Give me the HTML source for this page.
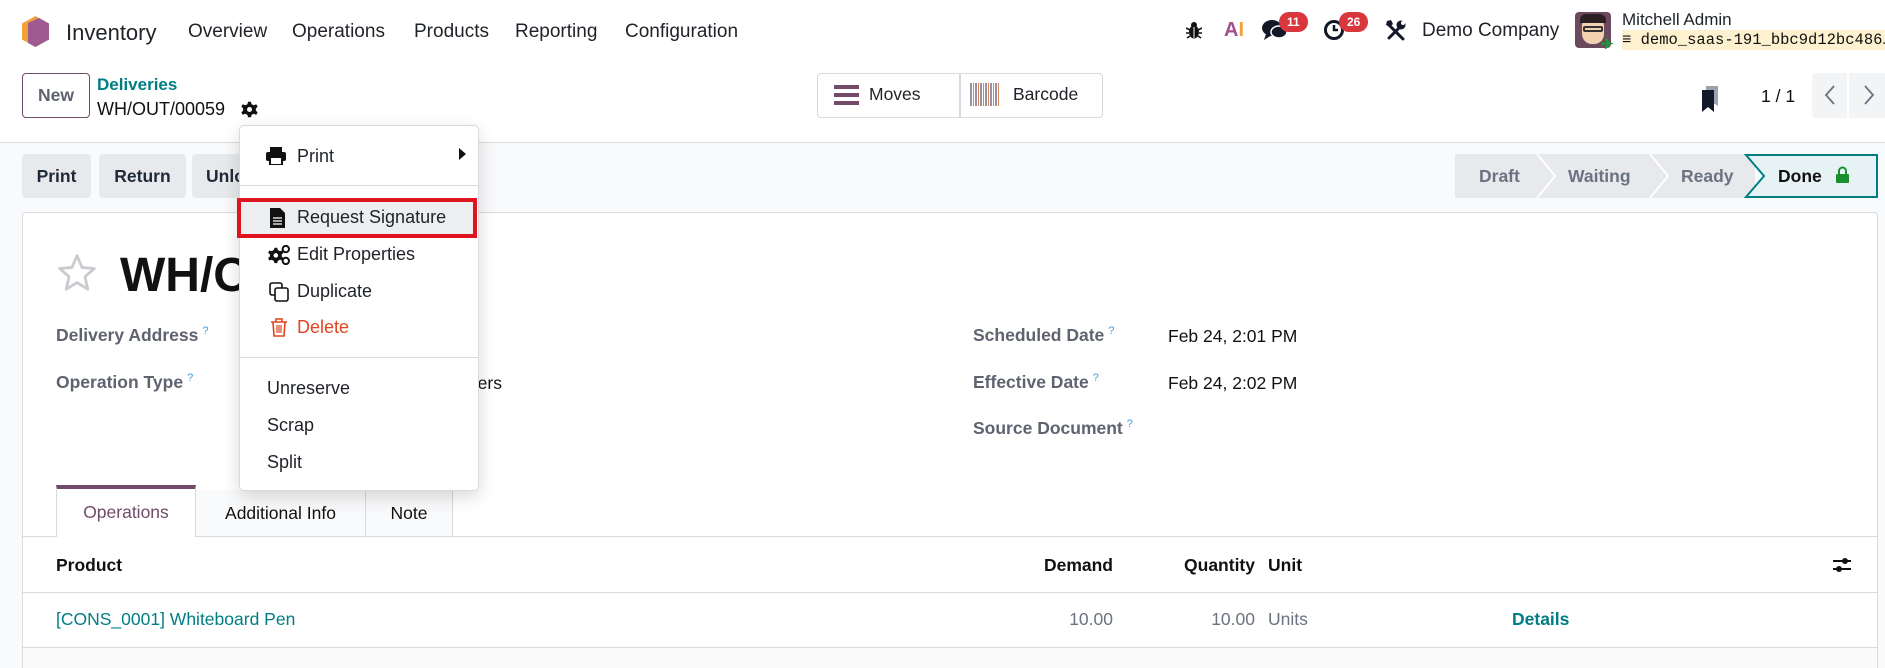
<!DOCTYPE html>
<html style="overflow:hidden"><head><meta charset="utf-8"><style>
*{margin:0;padding:0;box-sizing:border-box}
html,body{width:1885px;height:668px;overflow:hidden}
body{background:#fff;font-family:"Liberation Sans",sans-serif;color:#1f2937;position:relative}
.a{position:absolute;white-space:nowrap}
.nav{font-size:19px;color:#1f2328;top:21px}
.lbl{font-size:17.5px;font-weight:bold;color:#5f636f}
.q{color:#3ba0d6;font-size:11px;vertical-align:top;margin-left:4px;font-weight:normal}
.val{font-size:17.5px;color:#111}
.btn{position:absolute;background:#e7e9ed;border-radius:4px;font-size:17.5px;font-weight:bold;color:#1f2937;text-align:center;line-height:44px;height:44px;top:154px}
.mi{position:absolute;left:297px;font-size:18px;color:#1f2328}
</style></head><body>
<!-- navbar -->
<svg class="a" style="left:22px;top:16px" width="27" height="31" viewBox="0 0 27 31"><polygon points="13.5,0 27,7.5 27,23.5 13.5,31 0,23.5 0,7.5" fill="#f0a13a"/><polygon points="17,2 27,7.5 27,23.5 13.5,31 6,27 6,7" fill="#a05a92"/></svg>
<div class="a" style="left:66px;top:20px;font-size:22px;color:#1f2328">Inventory</div>
<div class="a nav" style="left:188px">Overview</div>
<div class="a nav" style="left:292px">Operations</div>
<div class="a nav" style="left:414px">Products</div>
<div class="a nav" style="left:515px">Reporting</div>
<div class="a nav" style="left:625px">Configuration</div>
<svg class="a" style="left:1186px;top:21px" width="16" height="18" viewBox="0 0 16 18"><ellipse cx="8" cy="11" rx="5" ry="6.5" fill="#111"/><circle cx="8" cy="4" r="3" fill="#111"/><path d="M0 7L4 9M16 7L12 9M0 12H3M16 12H13M1 17L4 15M15 17L12 15" stroke="#111" stroke-width="1.6"/><path d="M8 6V17" stroke="#fff" stroke-width="1"/></svg>
<div class="a" style="left:1224px;top:19px;font-size:20px;font-weight:bold;color:#a0508f">A<span style="color:#f0a13a">I</span></div>
<svg class="a" style="left:1262px;top:19px" width="26" height="22" viewBox="0 0 26 22"><ellipse cx="10" cy="9" rx="10" ry="8" fill="#111827"/><path d="M4 15 L2 21 L10 16Z" fill="#111827"/><ellipse cx="17" cy="13" rx="8" ry="6" fill="#111827" stroke="#fff" stroke-width="1.5"/></svg>
<div class="a" style="left:1279px;top:12px;background:#d9363e;color:#fff;border-radius:10px;font-size:12px;font-weight:bold;padding:3px 8px">11</div>
<svg class="a" style="left:1323px;top:19px" width="22" height="22" viewBox="0 0 22 22"><circle cx="11" cy="11" r="8.5" fill="none" stroke="#111827" stroke-width="3"/><path d="M11 6V11H15" stroke="#111827" stroke-width="2.5" fill="none"/></svg>
<div class="a" style="left:1339px;top:12px;background:#d9363e;color:#fff;border-radius:10px;font-size:12px;font-weight:bold;padding:3px 8px">26</div>
<svg class="a" style="left:1385px;top:19px" width="22" height="22" viewBox="0 0 22 22"><path d="M4 6L18 20" stroke="#111827" stroke-width="3" stroke-linecap="round"/><path d="M2 2L6 1L8 5L5 8L1 6Z" fill="#111827"/><path d="M4 19L13 10" stroke="#111827" stroke-width="3" stroke-linecap="round"/><circle cx="16" cy="6" r="4.5" fill="#111827"/><circle cx="18" cy="4" r="2" fill="#fff"/></svg>
<div class="a" style="left:1422px;top:20px;font-size:19px;color:#1f2328">Demo Company</div>
<div class="a" style="left:1575px;top:12px;width:36px;height:36px;border-radius:4px;background:#6b4a5e;overflow:hidden"><div style="position:absolute;left:7px;top:6px;width:22px;height:26px;background:#f2d2b0;border-radius:8px 8px 10px 10px"></div><div style="position:absolute;left:5px;top:2px;width:26px;height:9px;background:#2b2024;border-radius:6px 6px 0 0"></div><div style="position:absolute;left:8px;top:14px;width:20px;height:6px;border:2px solid #333;border-radius:2px"></div></div>
<div class="a" style="left:1601px;top:35px;color:#1e9a3a;font-size:15px;font-weight:bold">✈</div>
<div class="a" style="left:1622px;top:10px;font-size:17px;color:#1f2328">Mitchell Admin</div>
<div class="a" style="left:1622px;top:30px;width:263px;height:20px;background:#fdf1cf;font-family:'Liberation Mono',monospace;font-size:15.5px;line-height:20px;color:#111;overflow:hidden">≡ demo_saas-191_bbc9d12bc486…</div>
<!-- control panel -->
<div class="a" style="left:22px;top:73px;width:68px;height:45px;border:1px solid #714b67;border-radius:4px;font-size:17.5px;font-weight:bold;color:#5f636f;text-align:center;line-height:43px">New</div>
<div class="a" style="left:97px;top:75px;font-size:17px;font-weight:bold;color:#017e84">Deliveries</div>
<div class="a" style="left:97px;top:99px;font-size:18px;color:#111">WH/OUT/00059</div>
<svg class="a" style="left:241px;top:101px" width="17" height="17" viewBox="0 0 24 24"><path d="M10 1H14L15 4.5L18 6L21.5 4.5L23.5 8L21 10.5V13.5L23.5 16L21.5 19.5L18 18L15 19.5L14 23H10L9 19.5L6 18L2.5 19.5L0.5 16L3 13.5V10.5L0.5 8L2.5 4.5L6 6L9 4.5Z" fill="#111"/><circle cx="12" cy="12" r="3.5" fill="#fff"/></svg>
<div class="a" style="left:817px;top:73px;width:286px;height:45px;border:1px solid #d8dadd;border-radius:4px"></div>
<div class="a" style="left:959px;top:73px;width:2px;height:45px;background:#d8dadd"></div>
<div class="a" style="left:834px;top:85px;width:25px;height:4px;background:#714b67;box-shadow:0 8px 0 #714b67,0 16px 0 #714b67"></div>
<div class="a" style="left:869px;top:84px;font-size:17.5px;color:#1f2328">Moves</div>
<div class="a" style="left:970px;top:83px;width:30px;height:23px;background:repeating-linear-gradient(90deg,#9c8fa0 0 2px,#fff 2px 3px,#d4895a 3px 4px,#fff 4px 5px)"></div>
<div class="a" style="left:1013px;top:84px;font-size:17.5px;color:#1f2328">Barcode</div>
<svg class="a" style="left:1700px;top:86px" width="22" height="26" viewBox="0 0 22 26"><path d="M6 0H18V20L12 16L6 20Z" fill="#9ca3af"/><path d="M2 4H14V26L8 21L2 26Z" fill="#111827"/></svg>
<div class="a" style="left:1761px;top:86px;font-size:17.5px;color:#111">1 / 1</div>
<div class="a" style="left:1812px;top:73px;width:35px;height:45px;background:#f3f4f6;border-radius:4px 0 0 4px"></div>
<div class="a" style="left:1849px;top:73px;width:36px;height:45px;background:#f3f4f6"></div>
<svg class="a" style="left:1823px;top:84px" width="14" height="22" viewBox="0 0 14 22"><path d="M11 2L3 11L11 20" stroke="#6b7280" stroke-width="1.8" fill="none"/></svg>
<svg class="a" style="left:1862px;top:84px" width="14" height="22" viewBox="0 0 14 22"><path d="M3 2L11 11L3 20" stroke="#6b7280" stroke-width="1.8" fill="none"/></svg>
<!-- lower area -->
<div class="a" style="left:0;top:142px;width:1885px;height:526px;background:#f9fafb;border-top:1px solid #d8dadd"></div>
<div class="btn" style="left:22px;width:69px">Print</div>
<div class="btn" style="left:99px;width:87px">Return</div>
<div class="btn" style="left:192px;width:60px;text-align:left;padding-left:14px">Unlock</div>
<svg class="a" style="left:1455px;top:154px" width="424" height="44" viewBox="0 0 424 44"><rect x="0" y="0" width="300" height="44" fill="#e7e9ed"/><path d="M82 0L100 22L82 44" stroke="#fff" stroke-width="2" fill="none"/><path d="M195 0L213 22L195 44" stroke="#fff" stroke-width="2" fill="none"/><path d="M291 1H422V43H291L309 22Z" fill="#e6f2f3" stroke="#017e84" stroke-width="2"/></svg>
<div class="a" style="left:1479px;top:166px;font-size:17.5px;font-weight:bold;color:#6b7280">Draft</div>
<div class="a" style="left:1568px;top:166px;font-size:17.5px;font-weight:bold;color:#6b7280">Waiting</div>
<div class="a" style="left:1681px;top:166px;font-size:17.5px;font-weight:bold;color:#6b7280">Ready</div>
<div class="a" style="left:1778px;top:166px;font-size:17.5px;font-weight:bold;color:#111">Done</div>
<svg class="a" style="left:1836px;top:166px" width="13" height="17" viewBox="0 0 13 17"><path d="M3 8V5A3.5 3.5 0 0 1 10 5V8" stroke="#1a8f2e" stroke-width="2" fill="none"/><rect x="0" y="8" width="13" height="9" rx="1" fill="#1a8f2e"/></svg>
<!-- sheet -->
<div class="a" style="left:22px;top:212px;width:1856px;height:470px;background:#fff;border:1px solid #d8dadd;border-radius:4px"></div>
<div class="a" style="left:23px;top:647px;width:1854px;height:21px;background:#fafafa;border-top:1px solid #d8dadd"></div>
<svg class="a" style="left:56px;top:253px" width="42" height="40" viewBox="0 0 24 23"><path d="M12 1.5L14.9 8.3L22 8.9L16.6 13.6L18.2 20.8L12 17L5.8 20.8L7.4 13.6L2 8.9L9.1 8.3Z" fill="none" stroke="#c9cbcf" stroke-width="1.6" stroke-linejoin="round"/></svg>
<div class="a" style="left:120px;top:248px;font-size:48px;font-weight:bold;color:#111">WH/OUT/00059</div>
<div class="a lbl" style="left:56px;top:325px">Delivery Address<span class="q">?</span></div>
<div class="a lbl" style="left:56px;top:372px">Operation Type<span class="q">?</span></div>
<div class="a val" style="left:220px;top:373px;width:282px;text-align:right">San Francisco: Delivery Orders</div>
<div class="a lbl" style="left:973px;top:325px">Scheduled Date<span class="q">?</span></div>
<div class="a lbl" style="left:973px;top:372px">Effective Date<span class="q">?</span></div>
<div class="a lbl" style="left:973px;top:418px">Source Document<span class="q">?</span></div>
<div class="a val" style="left:1168px;top:326px">Feb 24, 2:01 PM</div>
<div class="a val" style="left:1168px;top:373px">Feb 24, 2:02 PM</div>
<!-- tabs -->
<div class="a" style="left:23px;top:536px;width:1854px;height:1px;background:#d8dadd"></div>
<div class="a" style="left:56px;top:485px;width:140px;height:52px;background:#fff;border:1px solid #d8dadd;border-top:4px solid #714b67;border-bottom:none;text-align:center;line-height:46px;font-size:17.5px;color:#714b67">Operations</div>
<div class="a" style="left:196px;top:490px;width:170px;height:46px;background:#f9fafb;border-right:1px solid #d8dadd;text-align:center;line-height:46px;font-size:17.5px;color:#111">Additional Info</div>
<div class="a" style="left:366px;top:490px;width:87px;height:46px;background:#f9fafb;border-right:1px solid #d8dadd;text-align:center;line-height:46px;font-size:17.5px;color:#111">Note</div>
<div class="a" style="left:56px;top:555px;font-size:17.5px;font-weight:bold;color:#111">Product</div>
<div class="a" style="left:1040px;top:555px;width:73px;text-align:right;font-size:17.5px;font-weight:bold;color:#111">Demand</div>
<div class="a" style="left:1170px;top:555px;width:85px;text-align:right;font-size:17.5px;font-weight:bold;color:#111">Quantity</div>
<div class="a" style="left:1268px;top:555px;font-size:17.5px;font-weight:bold;color:#111">Unit</div>
<svg class="a" style="left:1832px;top:556px" width="20" height="18" viewBox="0 0 20 18"><path d="M1 5H19M1 13H19" stroke="#111" stroke-width="2"/><circle cx="13" cy="5" r="3" fill="#111"/><circle cx="7" cy="13" r="3" fill="#111"/></svg>
<div class="a" style="left:23px;top:592px;width:1854px;height:1px;background:#d8dadd"></div>
<div class="a" style="left:56px;top:609px;font-size:17.5px;color:#017e84">[CONS_0001] Whiteboard Pen</div>
<div class="a" style="left:1040px;top:609px;width:73px;text-align:right;font-size:17.5px;color:#6b7280">10.00</div>
<div class="a" style="left:1170px;top:609px;width:85px;text-align:right;font-size:17.5px;color:#6b7280">10.00</div>
<div class="a" style="left:1268px;top:609px;font-size:17.5px;color:#6b7280">Units</div>
<div class="a" style="left:1512px;top:609px;font-size:17.5px;font-weight:bold;color:#017e84">Details</div>
<!-- dropdown -->
<div class="a" style="left:239px;top:125px;width:240px;height:366px;background:#fff;border:1px solid #d8dadd;border-radius:5px;box-shadow:0 6px 18px rgba(0,0,0,.15)"></div>
<svg class="a" style="left:266px;top:147px" width="20" height="18" viewBox="0 0 20 18"><rect x="4" y="0" width="12" height="5" fill="#111"/><rect x="0" y="5" width="20" height="9" rx="2" fill="#111"/><rect x="4" y="10" width="12" height="8" fill="#fff" stroke="#111" stroke-width="2"/></svg>
<div class="mi" style="top:146px">Print</div>
<div class="a" style="left:459px;top:148px;width:0;height:0;border-left:7px solid #111;border-top:6px solid transparent;border-bottom:6px solid transparent"></div>
<div class="a" style="left:240px;top:185px;width:238px;height:1px;background:#d8dadd"></div>
<div class="a" style="left:240px;top:201px;width:236px;height:35px;background:#eceef0"></div>
<div class="a" style="left:237px;top:198px;width:240px;height:40px;border:4px solid #e0141e"></div>
<svg class="a" style="left:270px;top:208px" width="15" height="20" viewBox="0 0 15 20"><path d="M0 0H10L15 5V20H0Z" fill="#111"/><path d="M3 10H12M3 13H12M3 16H12" stroke="#fff" stroke-width="1.3"/></svg>
<div class="mi" style="top:207px">Request Signature</div>
<svg class="a" style="left:268px;top:245px" width="22" height="20" viewBox="0 0 24 22"><path d="M7 3H10L10.7 5.5L13 6.8L15.5 6L17 8.5L15 10.3V12.7L17 14.5L15.5 17L13 16.2L10.7 17.5L10 20H7L6.3 17.5L4 16.2L1.5 17L0 14.5L2 12.7V10.3L0 8.5L1.5 6L4 6.8L6.3 5.5Z" fill="#111"/><circle cx="8.5" cy="11.5" r="2.5" fill="#fff"/><circle cx="19.5" cy="4.5" r="3.5" fill="none" stroke="#111" stroke-width="2.2"/><circle cx="19.5" cy="17.5" r="3.5" fill="none" stroke="#111" stroke-width="2.2"/></svg>
<div class="mi" style="top:244px">Edit Properties</div>
<svg class="a" style="left:269px;top:282px" width="20" height="20" viewBox="0 0 20 20"><rect x="1" y="1" width="12" height="12" rx="2" fill="none" stroke="#111" stroke-width="1.6"/><rect x="6" y="6" width="13" height="13" rx="2" fill="#fff" stroke="#111" stroke-width="1.6"/></svg>
<div class="mi" style="top:281px">Duplicate</div>
<svg class="a" style="left:271px;top:318px" width="16" height="19" viewBox="0 0 16 19"><path d="M0 4H16M5 4V1H11V4" stroke="#e0451f" stroke-width="1.6" fill="none"/><path d="M2 4L3 18H13L14 4" stroke="#e0451f" stroke-width="1.6" fill="none"/><path d="M6 7V15M8 7V15M10 7V15" stroke="#e0451f" stroke-width="1.2"/></svg>
<div class="mi" style="top:317px;color:#e0451f">Delete</div>
<div class="a" style="left:240px;top:357px;width:238px;height:1px;background:#d8dadd"></div>
<div class="mi" style="left:267px;top:378px">Unreserve</div>
<div class="mi" style="left:267px;top:415px">Scrap</div>
<div class="mi" style="left:267px;top:452px">Split</div>
</body></html>
